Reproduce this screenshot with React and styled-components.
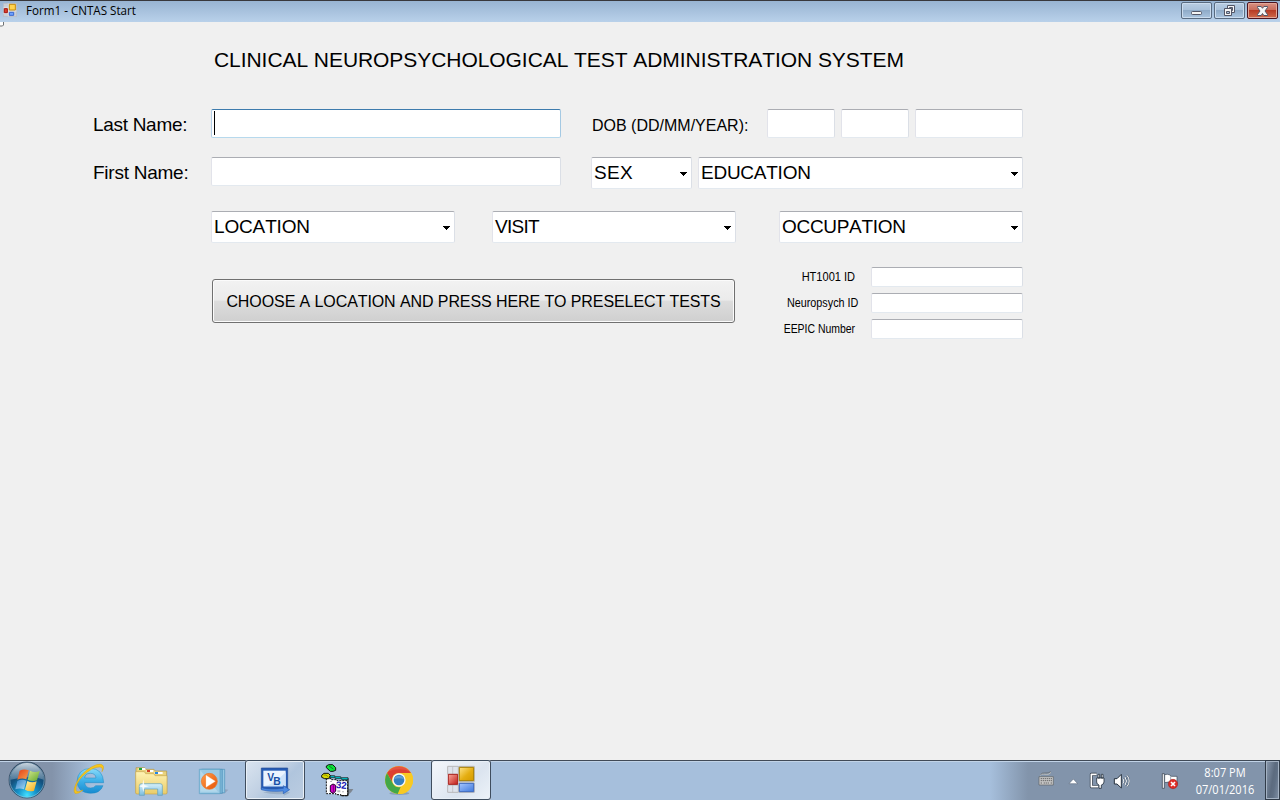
import React from "react";
import styled, { createGlobalStyle } from "styled-components";

const GlobalStyle = createGlobalStyle`
  * { box-sizing: border-box; }
  body { margin: 0; background: #f0f0f0; overflow: hidden; }
`;

const Desktop = styled.div`
  width: 1280px;
  height: 800px;
  display: flex;
  flex-direction: column;
  background: #f0f0f0;
  color: #000;
  font-family: "Liberation Sans", Arial, sans-serif;
  font-kerning: none;
  white-space: nowrap;
`;

/* ---------- window caption ---------- */

const Caption = styled.header`
  height: 22px;
  flex: none;
  display: flex;
  align-items: flex-start;
  padding: 1px 2px 0 3px;
  border-top: 1px solid #38383c;
  background: linear-gradient(#98b4d2, #b9d1ea);
`;

const CaptionIcon = styled.svg`
  width: 14px;
  height: 14px;
  margin-top: 1px;
`;

const CaptionText = styled.span`
  flex: 1;
  margin-left: 9px;
  font: 12px/18px "Open Sans", "Noto Sans", sans-serif;
  transform: scaleX(0.968);
  transform-origin: left;
`;

const CaptionButtons = styled.div`
  display: flex;
  gap: 2px;
`;

const CaptionButton = styled.button`
  width: 31px;
  height: 17px;
  padding: 0;
  display: flex;
  align-items: center;
  justify-content: center;
  border: 1px solid ${(p) => (p.$close ? "#4d1420" : "#596b80")};
  border-radius: 2px;
  box-shadow: inset 0 0 0 1px ${(p) => (p.$close ? "#e3a797" : "#cbdcee")};
  background: ${(p) =>
    p.$close
      ? "linear-gradient(#d89284 0%, #c96d5b 45%, #b73c26 50%, #cf6a4c 100%)"
      : "linear-gradient(#b9cde2 0%, #a9c1da 45%, #8fabc8 50%, #aac5df 100%)"};

  svg { width: 29px; height: 15px; flex: none; }
`;

/* ---------- form ---------- */

const Form = styled.main`
  flex: 1;
  padding-left: 93px;
  background: #f0f0f0;
`;

const Corner = styled.svg`
  display: block;
  width: 5px;
  height: 5px;
  margin-left: -93px;
`;

const Title = styled.h1`
  margin: 20px 0 0 121px;
  font-size: 21px;
  font-weight: 400;
  line-height: 26px;
  letter-spacing: -0.06px;
`;

const Row = styled.div`
  display: flex;
  align-items: flex-start;
  margin-top: ${(p) => p.$top}px;
  height: ${(p) => p.$height}px;
`;

const Label = styled.label`
  width: ${(p) => p.$width}px;
  flex: none;
  font-size: ${(p) => p.$size || 19}px;
  line-height: ${(p) => p.$line || 31}px;
  margin-left: ${(p) => p.$left || 0}px;
  letter-spacing: ${(p) => p.$spacing || 0}px;
`;

const Field = styled.input`
  display: block;
  flex: none;
  width: ${(p) => p.$width}px;
  height: ${(p) => p.$height || 29}px;
  margin-left: ${(p) => p.$left || 0}px;
  padding: 0 2px;
  border: 1px solid;
  border-color: #abadb3 #dbdfe6 #e3e9ef #e2e3ea;
  border-radius: 2px;
  background: #fff;
  outline: none;
`;

const ActiveField = styled.div`
  flex: none;
  width: 350px;
  height: 29px;
  padding: 1px 2px;
  border: 1px solid;
  border-color: #3d7bad #a4c9e3 #b7d9ed #b5cfe7;
  border-radius: 2px;
  background: #fff;
`;

const Caret = styled.div`
  width: 1px;
  height: 24px;
  background: #000;
`;

const SelectBox = styled.div`
  flex: none;
  width: ${(p) => p.$width}px;
  height: 32px;
  margin-left: ${(p) => p.$left || 0}px;
  padding: 0 4px 0 2px;
  display: flex;
  justify-content: space-between;
  border: 1px solid;
  border-color: #abadb3 #dbdfe6 #e3e9ef #e2e3ea;
  border-radius: 2px;
  background: #fff;
  font-size: 19px;
  line-height: 29px;
  letter-spacing: ${(p) => p.$spacing || 0}px;

  svg { width: 7px; height: 4px; margin-top: 14px; }
`;

const PreselectButton = styled.button`
  width: 523px;
  height: 44px;
  margin: 12px 0 0 119px;
  padding: 1px 0 0;
  border: 1px solid #707070;
  border-radius: 3px;
  box-shadow: inset 0 0 0 1px #fbfbfb;
  background: linear-gradient(#f2f2f2 0%, #ebebeb 48%, #dddddd 50%, #cfcfcf 100%);
  color: #000;
  font: 16px/20px "Liberation Sans", Arial, sans-serif;
  font-kerning: none;
  letter-spacing: -0.09px;
`;

const IdList = styled.div`
  display: flex;
  flex-direction: column;
  gap: 6px;
  width: 246px;
  margin-left: 42px;
`;

const IdRow = styled.div`
  display: flex;
  justify-content: flex-end;
`;

const IdLabel = styled.label`
  font-size: 12px;
  line-height: 20px;
  margin-right: ${(p) => p.$gap}px;
  transform: scaleX(${(p) => p.$stretch});
  transform-origin: right;
`;

/* ---------- taskbar ---------- */

const Taskbar = styled.footer`
  height: 40px;
  flex: none;
  display: flex;
  border-top: 1px solid #404a57;
  box-shadow: inset 0 1px 0 #c1d3e7;
  background: linear-gradient(
    90deg,
    #8393aa 0,
    #8393aa 52px,
    #a6bfdc 92px,
    #a6bfdc 990px,
    #8294ab 1028px,
    #8294ab 1280px
  );
`;

const StartSlot = styled.div`
  width: 59px;
  flex: none;

  svg { display: block; width: 59px; height: 40px; margin-top: -1px; }
`;

const Apps = styled.div`
  flex: 1;
  display: flex;
  gap: 2px;
  margin-top: -1px;
`;

const AppSlot = styled.div`
  width: 60px;
  height: 40px;
  border-radius: 3px;
  ${(p) =>
    p.$open &&
    `
    background: ${
      p.$front
        ? "linear-gradient(135deg, #f4f7fb 0%, #e3eaf3 45%, #dbe4ef 60%, #eef3f9 100%)"
        : "linear-gradient(135deg, #dbe5f0 0%, #c0d0e3 45%, #b0c5dd 60%, #bccde1 100%)"
    };
    box-shadow: inset 0 0 0 1px #3f4d5e, inset 0 0 0 2px #e9f0f7;
  `}

  svg { display: block; width: 60px; height: 40px; }
`;

const Tray = styled.div`
  display: flex;
  flex: none;
  margin-top: -1px;

  svg { display: block; width: 185px; height: 40px; }
`;

const Clock = styled.div`
  width: 80px;
  padding-top: 4px;
  color: #fff;
  text-align: center;
  font: 12px/17px "Open Sans", "Noto Sans", sans-serif;
  transform: scaleX(0.92);
`;

const ShowDesktop = styled.div`
  width: 15px;
  height: 40px;
  border: 1px solid #303b49;
  box-shadow: inset 0 0 0 1px #a4b2c3;
  background: linear-gradient(100deg, #8b9bb0 0%, #5c6b7f 50%, #5f6f84 65%, #8191a7 100%);
`;

/* ---------- icons ---------- */

const FormIcon = () => (
  <svg viewBox="603 24 180 120">
    <defs>
      <linearGradient id="fy" x2="1" y2="1"><stop stopColor="#ffe488" /><stop offset=".55" stopColor="#e5ae12" /><stop offset="1" stopColor="#d39a00" /></linearGradient>
      <linearGradient id="fr" x2="1" y2="1"><stop stopColor="#f9a89c" /><stop offset="1" stopColor="#c21d18" /></linearGradient>
      <linearGradient id="fb" x2="1" y2="1"><stop stopColor="#a6c6ff" /><stop offset="1" stopColor="#3e78dc" /></linearGradient>
    </defs>
    <path d="M653 43h32v24h-32zM653 99h32v22h-32zM687 43h46v46h-46zM687 93h46v28h-46z" fill="#dfe4ec" stroke="#b8b8ba" strokeWidth="3" />
    <path d="M668 44v22M668 99v22" stroke="#b8b8ba" strokeWidth="2" />
    <path d="M688 46h43v40h-43z" fill="url(#fy)" stroke="#a77e00" strokeWidth="3" />
    <path d="M655 67h28v30h-28z" fill="url(#fr)" stroke="#a8201c" strokeWidth="3" />
    <path d="M688 94h43v25h-43z" fill="url(#fb)" stroke="#3c68bd" strokeWidth="3" />
  </svg>
);

const SmallFormIcon = () => (
  <CaptionIcon viewBox="9 9 42 42">
    <path d="M10 10h40v40H10z" fill="#c9ced6" stroke="#b7babf" strokeWidth="2" />
    <path d="M25 10v40M10 22h15M10 41h15M25 33h25" stroke="#e6e8ec" strokeWidth="2" />
    <path d="M28 13h18v17H28z" fill="#ffd34f" stroke="#c78c08" strokeWidth="3" />
    <path d="M13 26h9v12h-9z" fill="#d8402c" stroke="#a9140e" strokeWidth="3" />
    <path d="M28 37h13v9H28z" fill="#70a2ff" stroke="#3868cf" strokeWidth="3" />
  </CaptionIcon>
);

const StartOrb = () => (
  <svg viewBox="0 24 177 120">
    <defs>
      <radialGradient id="orb" cx=".5" cy=".92" r=".9">
        <stop stopColor="#43e0ff" /><stop offset=".28" stopColor="#1694cb" />
        <stop offset=".6" stopColor="#14527f" /><stop offset="1" stopColor="#224464" />
      </radialGradient>
      <linearGradient id="gloss" x2="0" y2="1"><stop stopColor="#e5edf4" stopOpacity=".85" /><stop offset="1" stopColor="#86a3b9" stopOpacity=".5" /></linearGradient>
      <linearGradient id="wr" x2="1" y2="1"><stop stopColor="#e33d16" /><stop offset="1" stopColor="#f8a24c" /></linearGradient>
      <linearGradient id="wg" x2="1" y2="1"><stop stopColor="#d1e58b" /><stop offset="1" stopColor="#63a82c" /></linearGradient>
      <linearGradient id="wb" x2="1" y2="1"><stop stopColor="#3380c8" /><stop offset="1" stopColor="#a7dcf5" /></linearGradient>
      <linearGradient id="wy" x2="1" y2="1"><stop stopColor="#fff3a0" /><stop offset="1" stopColor="#f5aa18" /></linearGradient>
    </defs>
    <circle cx="81" cy="84" r="54" fill="url(#orb)" stroke="#2d4258" strokeWidth="2" />
    <circle cx="81" cy="84" r="51.5" fill="none" stroke="#b8d2e1" strokeWidth="2" opacity=".7" />
    <path d="M31 83a50 50 0 0 1 100 0q-22-9-50-7t-50 7z" fill="url(#gloss)" />
    <path d="M59 56q13-7 27-1l-7 27q-13-5-27 1z" fill="url(#wr)" />
    <path d="M90 56q14 7 29 1l-8 28q-13 5-28-2z" fill="url(#wg)" />
    <path d="M52 87q13-7 27-1l-7 26q-13-5-26 0z" fill="url(#wb)" />
    <path d="M82 87q14 7 28 1l-8 28q-14 5-27-3z" fill="url(#wy)" />
  </svg>
);

const ExplorerE = () => (
  <svg viewBox="177 24 180 120">
    <defs>
      <linearGradient id="ie" x2="0" y2="1"><stop stopColor="#8cdcfa" /><stop offset=".5" stopColor="#3eb0e8" /><stop offset="1" stopColor="#168bd0" /></linearGradient>
    </defs>
    <path
      d="M311 92H254q2 16 18 16 10 0 15-7h22q-8 23-38 23-38-2-40-36 2-37 40-39 38 1 40 43zM254 78h34q-1-14-17-14t-17 14z"
      fill="url(#ie)" stroke="#2088c0" strokeWidth="1.5" fillRule="evenodd"
    />
    <path
      d="M306 59q4-14-7-14-22-1-52 28-23 26-19 42 3 9 21-1-15 13-24 10-9-10 11-44 23-32 54-42 24-5 20 13z"
      fill="#f8c719" stroke="#d9a20e" strokeWidth="1.5"
    />
  </svg>
);

const FolderIcon = () => (
  <svg viewBox="363 24 180 120">
    <defs>
      <linearGradient id="fo" x2="0" y2="1"><stop stopColor="#fff3b4" /><stop offset="1" stopColor="#e9cc69" /></linearGradient>
      <linearGradient id="st" x2="0" y2="1"><stop stopColor="#d5f0fb" /><stop offset="1" stopColor="#7cbddd" /></linearGradient>
    </defs>
    <path d="M408 47h26l4 5h24l4 5h34v67h-92z" fill="#e9d27d" stroke="#b29649" strokeWidth="2" />
    <path d="M407 59h26l4 6h24l4 6h36v53q-2 2-4 2h-86q-4 0-4-4z" fill="url(#fo)" stroke="#c8a84e" strokeWidth="2" />
    <path d="M416 48h20v6h-20zM440 54h20v6h-20zM464 60h24v6h-24z" fill="#fff" />
    <path d="M417 48h9v6h-9z" fill="#1da437" />
    <path d="M441 54h9v6h-9z" fill="#d33f24" />
    <path d="M465 60h9v6h-9z" fill="#2488e8" />
    <path d="M418 130V101q0-6 7-6h55q7 0 7 6v29h-14v-19h-40v19z" fill="url(#st)" stroke="#5e9fbe" strokeWidth="2" />
    <path d="M430 82l3 17 14 4-14 3-3 15-3-15-10-3 10-4z" fill="#fff" opacity=".85" />
  </svg>
);

const MediaIcon = () => (
  <svg viewBox="549 24 180 120">
    <defs>
      <linearGradient id="mo" x2="1" y2="1"><stop stopColor="#ff9d4a" /><stop offset="1" stopColor="#e65305" /></linearGradient>
    </defs>
    <path d="M614 126l62-4 9-9-10-1v12z" fill="#7d8da3" opacity=".5" />
    <path d="M607 52h67v70h-67z" fill="#96c9e4" stroke="#4d91b9" strokeWidth="2" />
    <path d="M602 52h65v72h-65z" fill="#7ab5d6" stroke="#4d91b9" strokeWidth="2" />
    <path d="M598 52h62v73h-62z" fill="#9bcae4" stroke="#5ca0c4" strokeWidth="2" />
    <path d="M601 55l53 64h-53z" fill="#c3e1f0" opacity=".6" />
    <circle cx="628" cy="88" r="24" fill="url(#mo)" stroke="#e7752a" strokeWidth="2" />
    <path d="M618 70l28 18-28 18z" fill="#fff" stroke="#f9dac2" />
  </svg>
);

const BasicIcon = () => (
  <svg viewBox="45 24 180 120">
    <path d="M99 121q20-5 51-2h10v-7l20 10-19 9v-5q-32 3-62-5z" fill="#8aa0b8" opacity=".6" />
    <path d="M94 48h79v63H94z" fill="#255bb5" stroke="#244b94" strokeWidth="2" />
    <path d="M100 56h67v47h-67z" fill="#eaf4ff" />
    <path d="M100 103q27-2 67-42v42z" fill="#cce2fa" />
    <text x="112" y="87" fontFamily="Liberation Sans, sans-serif" fontSize="31" fontWeight="700" fill="#174fa5">V</text>
    <text x="130" y="98" fontFamily="Liberation Sans, sans-serif" fontSize="31" fontWeight="700" fill="#174fa5">B</text>
    <path d="M94 107q26 8 66 2v-8l19 12-19 12v-8q-40 3-66-4z" fill="#4f8ce3" stroke="#285fb7" strokeWidth="2" />
  </svg>
);

const TesterIcon = () => (
  <svg viewBox="231 24 180 120">
    <path d="M355 111h15l-6 9-9 8z" fill="#7e8690" />
    <path d="M289 80h14v3h18v3h32v45h-20v-3h-15v-3h-29z" fill="#fff" stroke="#111" strokeWidth="3" strokeDasharray="6 3" />
    <path d="M354 79v52h-22" fill="none" stroke="#111" strokeWidth="3" />
    <path d="M300 87h6v3h-6zM319 94h4v4h-4zM301 100h5v3h-5zM322 115h9v6h-9zM336 118h6v3h-6zM311 117h5v5h-5z" fill="#b7b7bd" />
    <path d="M300 71h14v3h18v3h22v6h-19v-3h-19v-3h-16z" fill="#00c7cf" stroke="#111" strokeWidth="2" />
    <path d="M289 42l7-4h12l9 9v8l-8 3h-8l-12-11z" fill="#0ce33a" stroke="#111" strokeWidth="3" />
    <path d="M297 42l13 9" stroke="#078d22" strokeWidth="3" />
    <path d="M275 70l7-6h13l6 6-5 10h-12l-9-4z" fill="#d9d600" stroke="#111" strokeWidth="3" />
    <path d="M281 69h7l6 5" fill="none" stroke="#6b7300" strokeWidth="2" />
    <path d="M301 101l8-5 8 4v17l-7 7-9-5z" fill="#d600cf" stroke="#26002b" strokeWidth="3" />
    <path d="M310 99v21" stroke="#780078" strokeWidth="3" />
    <text x="317" y="108" fontFamily="Liberation Sans, sans-serif" fontSize="29" fontWeight="700" fill="#1515b5" transform="rotate(5 317 108)">32</text>
  </svg>
);

const BrowserIcon = () => (
  <svg viewBox="417 24 180 120">
    <ellipse cx="508" cy="124" rx="30" ry="5" fill="#64788f" opacity=".45" />
    <circle cx="507" cy="84" r="42" fill="#f8cc24" />
    <path d="M471 63A42 42 0 0 1 543 63H507A21 21 0 0 0 488 93z" fill="#dc4032" />
    <path d="M471 63l18 32a21 21 0 0 0 23 10l-9 21a42 42 0 0 1-32-63z" fill="#43a748" />
    <path d="M507 64h37a42 42 0 0 1-40 62l21-32a21 21 0 0 0-18-30z" fill="#f8c923" />
    <path d="M473 59a42 42 0 0 1 68 0q-31-14-68 0z" fill="#f37b64" opacity=".35" />
    <circle cx="507" cy="84" r="20" fill="#f5f6f7" />
    <circle cx="507" cy="84" r="16" fill="#347fc1" />
    <path d="M492 82a16 16 0 0 1 30 0q-15-7-30 0z" fill="#619fd5" />
  </svg>
);

const TrayIcons = () => (
  <svg viewBox="0 24 555 120">
    <g fill="none" stroke="#5e6064" strokeWidth="2">
      <path d="M117 74h43v25h-43z" fill="#c5c5c5" />
      <path d="M122 80h34M122 86h34M122 93h5m4 0h17m4 0h4" stroke="#686868" strokeWidth="3" strokeDasharray="4 2" />
      <path d="M121 70q3-5 10-4l9 1q8 1 13-6" stroke="#c1c1bd" strokeWidth="3" />
      <path d="M122 67q5-5 12-4 12 1 18-4" />
    </g>
    <path d="M207 95l13-14 13 14z" fill="#fff" stroke="#4e5d70" strokeWidth="1.5" />
    <g strokeLinejoin="round">
      <path d="M290 67h-16v37h21" fill="none" stroke="#27323f" strokeWidth="9" />
      <path d="M290 67h-16v37h21" fill="none" stroke="#fff" strokeWidth="5" />
      <path d="M290 78h22v12q-1 8-8 9v10h-7V99q-7-2-7-9zM294 67h5v11h-5zM304 67h5v11h-5z" fill="#fff" stroke="#27323f" strokeWidth="2.5" />
      <path d="M343 80h8l13-13v41l-13-12h-8z" fill="#fff" stroke="#27323f" strokeWidth="3" />
      <path d="M369 80q5 7 0 15M375 75q9 12 0 25M381 70q13 17 0 34" fill="none" stroke="#44566b" strokeWidth="5" />
      <path d="M369 80q5 7 0 15M375 75q9 12 0 25M381 70q13 17 0 34" fill="none" stroke="#fff" strokeWidth="3" />
      <path d="M487 65h6v44h-6z" fill="#fff" stroke="#27323f" strokeWidth="2" />
      <path d="M494 68q8-3 16 1l4 4h17v22q-8 1-15-2-10-5-22-1z" fill="#fff" stroke="#354353" strokeWidth="2" />
      <path d="M512 70v16h18" fill="none" stroke="#6e8093" strokeWidth="2" />
    </g>
    <circle cx="519" cy="96" r="14" fill="#df2c25" stroke="#9b1c19" strokeWidth="1.5" />
    <path d="M513 90l12 12m0-12l-12 12" stroke="#fff" strokeWidth="5" />
  </svg>
);

function Select({ text, width, left, spacing }) {
  return (
    <SelectBox $width={width} $left={left} $spacing={spacing}>
      {text}
      <svg viewBox="0 0 7 4" shapeRendering="crispEdges"><path d="M0 0h7v1H6v1H5v1H4v1H3V3H2V2H1V1H0z" /></svg>
    </SelectBox>
  );
}

export default function App() {
  return (
    <Desktop>
      <GlobalStyle />
      <Caption>
        <SmallFormIcon />
        <CaptionText>Form1 - CNTAS Start</CaptionText>
        <CaptionButtons>
          <CaptionButton aria-label="Minimize">
            <svg viewBox="0 0 29 15"><rect x="9.500" y="8.500" width="10" height="3" rx="1" fill="#f4f4f4" stroke="#535666" /></svg>
          </CaptionButton>
          <CaptionButton aria-label="Restore">
            <svg viewBox="0 0 29 15">
              <path d="M12.500 2.500h7v7h-7z" fill="#f4f4f4" stroke="#535666" />
              <path d="M14.500 4.500h3v3h-3z" fill="#8ea9c5" stroke="#535666" />
              <path d="M9.500 5.500h7v7h-7z" fill="#f4f4f4" stroke="#535666" />
              <path d="M11.500 8.500h3v2h-3z" fill="#a5c0dc" stroke="#535666" />
            </svg>
          </CaptionButton>
          <CaptionButton $close aria-label="Close">
            <svg viewBox="0 0 29 15">
              <path d="M9.500 3.500h3.700l1.300 1.800 1.300-1.800h3.700v1L17 8l2.500 3.500v1h-3.700l-1.300-2-1.300 2H9.500v-1L12 8 9.500 4.500z" fill="#f5f5f5" stroke="#535666" />
            </svg>
          </CaptionButton>
        </CaptionButtons>
      </Caption>

      <Form>
        <Corner viewBox="0 0 5 5"><path d="M0 0h3v3q-1 1.500-3 1.500z" fill="#fff" /><path d="M3.500 0v3l-1 1H0" fill="none" stroke="#6f7173" /></Corner>
        <Title>CLINICAL NEUROPSYCHOLOGICAL TEST ADMINISTRATION SYSTEM</Title>

        <Row $top={36} $height={29}>
          <Label $width={118} $spacing={-0.3}>Last Name:</Label>
          <ActiveField><Caret /></ActiveField>
          <Label $left={31} $width={175} $size={16} $line={33}>DOB (DD/MM/YEAR):</Label>
          <Field $width={68} />
          <Field $width={68} $left={6} />
          <Field $width={108} $left={6} />
        </Row>

        <Row $top={19} $height={32}>
          <Label $width={118} $spacing={-0.25}>First Name:</Label>
          <Field $width={350} />
          <Select text="SEX" width={101} left={30} spacing={0.3} />
          <Select text="EDUCATION" width={325} left={6} spacing={-0.25} />
        </Row>

        <Row $top={22} $height={32}>
          <Select text="LOCATION" width={244} left={118} spacing={-0.15} />
          <Select text="VISIT" width={244} left={37} spacing={-0.7} />
          <Select text="OCCUPATION" width={244} left={43} spacing={-0.3} />
        </Row>

        <Row $top={24} $height={72}>
          <PreselectButton>CHOOSE A LOCATION AND PRESS HERE TO PRESELECT TESTS</PreselectButton>
          <IdList>
            <IdRow><IdLabel $gap={16} $stretch={0.92}>HT1001 ID</IdLabel><Field $width={152} $height={20} /></IdRow>
            <IdRow><IdLabel $gap={13} $stretch={0.9}>Neuropsych ID</IdLabel><Field $width={152} $height={20} /></IdRow>
            <IdRow><IdLabel $gap={16} $stretch={0.87}>EEPIC Number</IdLabel><Field $width={152} $height={20} /></IdRow>
          </IdList>
        </Row>
      </Form>

      <Taskbar>
        <StartSlot><StartOrb /></StartSlot>
        <Apps>
          <AppSlot><ExplorerE /></AppSlot>
          <AppSlot><FolderIcon /></AppSlot>
          <AppSlot><MediaIcon /></AppSlot>
          <AppSlot $open><BasicIcon /></AppSlot>
          <AppSlot><TesterIcon /></AppSlot>
          <AppSlot><BrowserIcon /></AppSlot>
          <AppSlot $open $front><FormIcon /></AppSlot>
        </Apps>
        <Tray>
          <TrayIcons />
          <Clock>8:07 PM<br />07/01/2016</Clock>
          <ShowDesktop />
        </Tray>
      </Taskbar>
    </Desktop>
  );
}
